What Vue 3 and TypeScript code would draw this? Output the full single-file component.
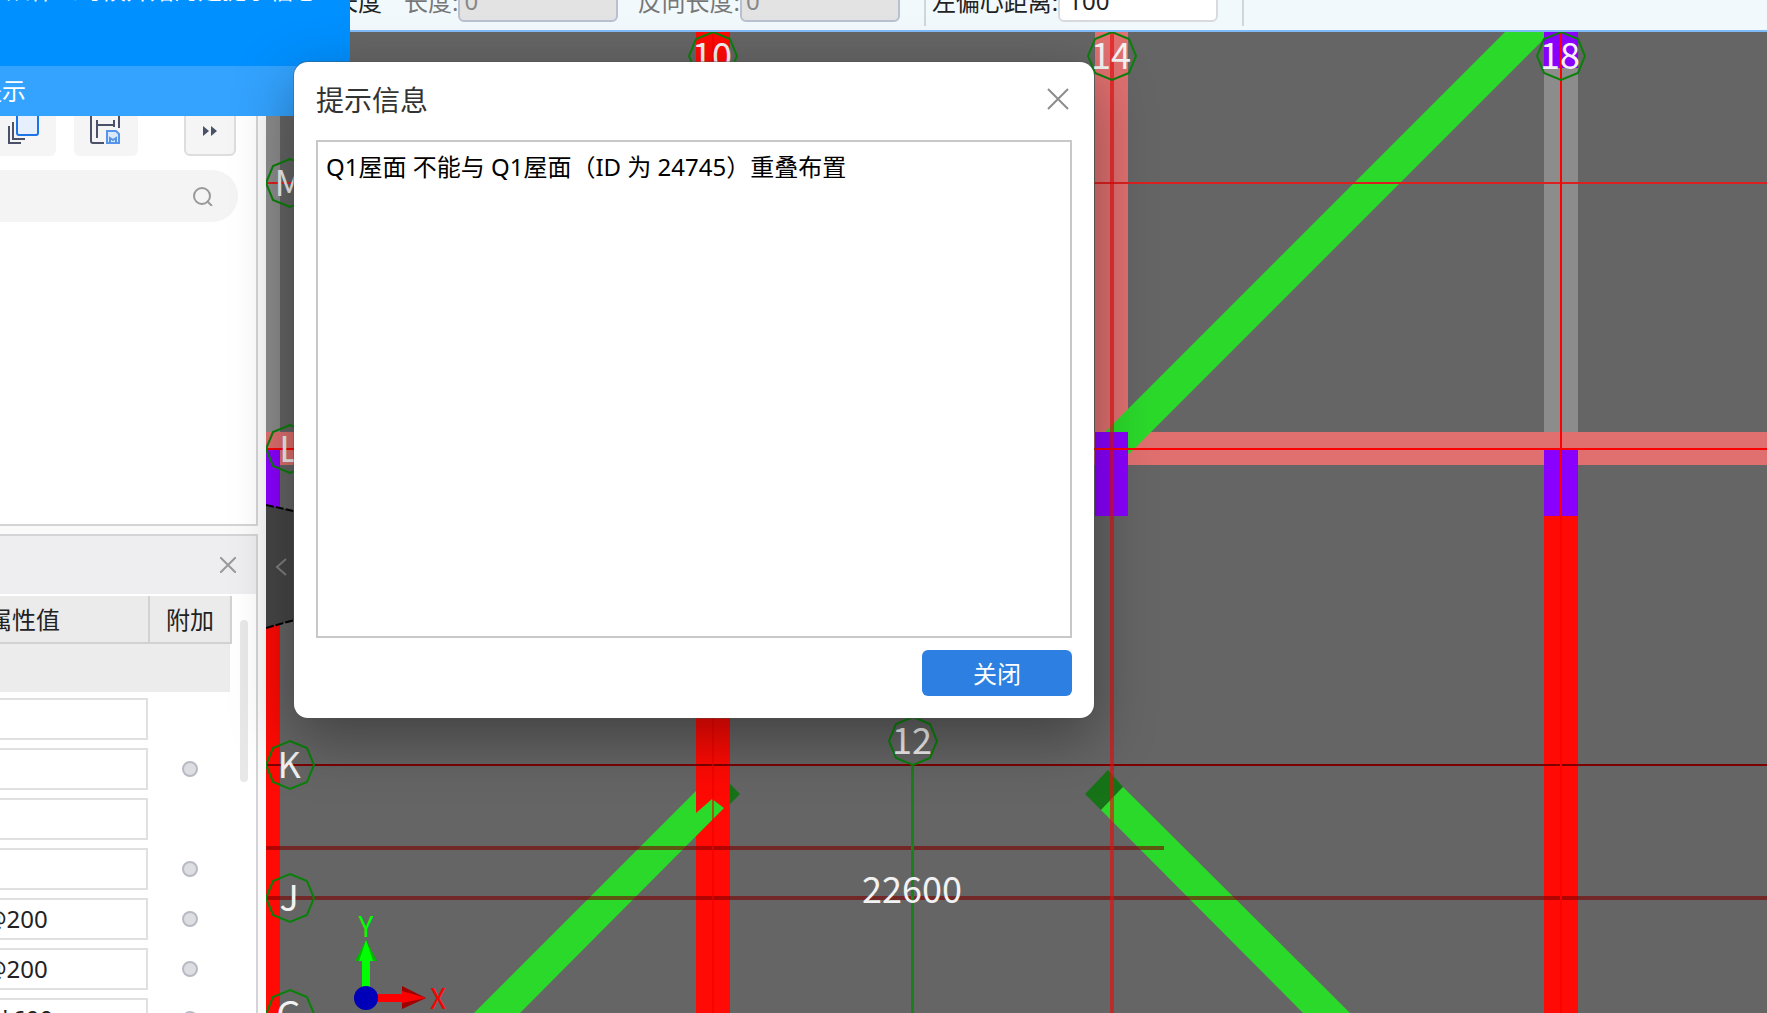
<script setup lang="ts">
import { ref } from 'vue'

interface PropertyRow { id: number; value: string; extra: boolean }
interface AxisMark { label: string; x: number; y: number }

const message = ref('Q1屋面 不能与 Q1屋面（ID 为 24745）重叠布置')
const length = ref('0')
const reverseLength = ref('0')
const offset = ref('100')

const rows = ref<PropertyRow[]>([
  { id: 1, value: '', extra: false },
  { id: 2, value: '', extra: true },
  { id: 3, value: '', extra: false },
  { id: 4, value: '', extra: true },
  { id: 5, value: '@200', extra: true },
  { id: 6, value: '@200', extra: true },
  { id: 7, value: '0*600', extra: true },
])

const marks: AxisMark[] = [
  { label: '10', x: 713, y: 56 },
  { label: '14', x: 1112, y: 56 },
  { label: '18', x: 1561, y: 56 },
  { label: '12', x: 913, y: 741 },
  { label: 'M', x: 290, y: 183 },
  { label: 'L', x: 290, y: 449 },
  { label: 'K', x: 290, y: 765 },
  { label: 'J', x: 290, y: 898 },
  { label: 'G', x: 290, y: 1014 },
]

const octagon = '0,-24 17,-17 24,0 17,17 0,24 -17,17 -24,0 -17,-17'
</script>

<template>
  <div class="app">
    <header class="toolbar">
      <span class="mode">长度</span>
      <label class="muted" for="len">长度:</label>
      <input id="len" v-model="length" class="field off" disabled />
      <label class="muted second" for="rev">反向长度:</label>
      <input id="rev" v-model="reverseLength" class="field off" disabled />
      <i class="sep first"></i>
      <label for="ecc">左偏心距离:</label>
      <input id="ecc" v-model="offset" class="field" />
      <i class="sep"></i>
    </header>

    <div class="work">
      <aside class="side">
        <section class="library">
          <div class="tools">
            <button class="tool" aria-label="复制">
              <svg width="32" height="32" viewBox="0 0 32 32" fill="none" stroke="#4a5168" stroke-width="2">
                <path d="M1 10v17h12M5 6v17h12" />
                <rect x="9" y="-6" width="21" height="25" rx="2" fill="#e6effd" stroke="#1b74e8" />
              </svg>
            </button>
            <button class="tool" aria-label="存档">
              <svg width="32" height="32" viewBox="0 0 32 32" fill="none" stroke="#4a5168" stroke-width="2">
                <path d="M14 27H3q-2 0-2-2V-2M29 -2v14M7 4v18M7 9h17M24 4v7" />
                <path d="M17 15h9l3 3v9H17z" fill="#dbe8fb" stroke="#5596ea" />
                <path d="M20 27v-5l3 2 3-2v5" stroke="#5596ea" />
              </svg>
            </button>
            <button class="tool more" aria-label="更多">
              <svg width="14" height="12" viewBox="0 0 14 12" fill="#4a5168"><path d="M0 1l6 5-6 5zM8 1l6 5-6 5z" /></svg>
            </button>
          </div>
          <div class="search">
            <input type="search" aria-label="搜索" />
            <svg width="20" height="20" viewBox="0 0 20 20" fill="none" stroke="#999" stroke-width="2">
              <circle cx="9" cy="10" r="8" /><path d="M14 15l5 5" />
            </svg>
          </div>
        </section>

        <section class="props">
          <div class="props-head">
            <button class="icon" aria-label="收起">
              <svg width="16" height="16" viewBox="0 0 16 16" stroke="#999" stroke-width="2"><path d="M0 0l16 16M16 0L0 16" /></svg>
            </button>
          </div>
          <div class="grid">
            <table>
              <thead>
                <tr><th class="val">属性值</th><th class="add">附加</th></tr>
              </thead>
              <tbody>
                <tr class="group"><td colspan="2"></td></tr>
                <tr v-for="row in rows" :key="row.id">
                  <td><input v-model="row.value" class="cell" aria-label="属性值" /></td>
                  <td><input v-if="row.extra" type="checkbox" class="dot" aria-label="附加" /></td>
                </tr>
              </tbody>
            </table>
            <div class="scroll"></div>
          </div>
        </section>
      </aside>

      <main class="canvas">
        <svg width="100%" height="100%">
          <g transform="translate(-266 -32)">
            <rect x="266" y="32" width="14" height="400" fill="#8c8c8c" />
            <rect x="1544" y="32" width="34" height="400" fill="#8c8c8c" />
            <rect x="1095" y="32" width="33" height="400" fill="#e07070" />
            <rect x="266" y="432" width="3000" height="33" fill="#e07070" />
            <polygon points="1505,32 1544,32 1544,39 1129,454 1105,432" fill="#2bd92b" />
            <rect x="1544" y="32" width="34" height="36" fill="#8a00ff" />
            <rect x="266" y="449" width="14" height="60" fill="#8a00ff" />
            <rect x="1095" y="432" width="33" height="84" fill="#8a00ff" />
            <rect x="1544" y="449" width="34" height="67" fill="#8a00ff" />
            <rect x="1544" y="516" width="34" height="3000" fill="#ff0a04" />
            <rect x="266" y="620" width="14" height="3000" fill="#ff0a04" />
            <polygon points="717,771 740,794 717,817" fill="#177317" />
            <rect x="696" y="32" width="34" height="3000" fill="#ff0a04" />
            <polygon points="474,1013 696,791 696,813 712,799 724,808 520,1013" fill="#2bd92b" />
            <polygon points="1108,770 1085,794 1101,810 1123,787" fill="#177317" />
            <polygon points="1123,787 1101,810 1303,1013 1350,1013" fill="#2bd92b" />

            <rect x="266" y="182" width="3000" height="2" fill="#dc2020" />
            <rect x="266" y="448" width="3000" height="2" fill="#f00" />
            <rect x="266" y="764" width="3000" height="2" fill="#7d0000" />
            <rect x="266" y="846" width="898" height="4" fill="#7d0000" fill-opacity=".6" />
            <rect x="266" y="896" width="3000" height="4" fill="#7d0000" fill-opacity=".6" />
            <rect x="712" y="32" width="2" height="3000" fill="#e00" fill-opacity=".6" />
            <rect x="1110" y="32" width="4" height="3000" fill="#e80d0d" fill-opacity=".64" />
            <rect x="1560" y="32" width="2" height="3000" fill="#f00" />
            <rect x="911" y="765" width="3" height="3000" fill="#1b7f1b" />

            <g v-for="m in marks" :key="m.label" :transform="`translate(${m.x} ${m.y})`">
              <polygon :points="octagon" fill="none" stroke="#0a800a" stroke-width="2" />
              <text class="mark" x="-1" y="13">{{ m.label }}</text>
            </g>
            <text class="mark" x="912" y="903">22600</text>

            <polygon points="266,505 298,512 298,619 266,628" fill="#464646" />
            <path d="M266 505l32 7M266 628l32-9" stroke="#000" stroke-dasharray="8 2" stroke-width="2" />
            <path d="M286 559l-9 8 9 8" fill="none" stroke="#808080" stroke-width="2" />

            <rect x="362" y="955" width="8" height="35" fill="#0f0" />
            <path d="M366 940l11 21h-22z" fill="#00b800" />
            <path d="M366 940l7 21h-14z" fill="#0f0" />
            <rect x="376" y="994" width="28" height="8" fill="#f00" />
            <path d="M402 986l24 12-24 11z" fill="#a00000" />
            <path d="M402 991l24 7-24 5z" fill="#f00" />
            <circle cx="366" cy="998" r="12" fill="#0000b8" />
            <text class="axis" x="366" y="937" fill="#0f0">Y</text>
            <text class="axis" x="438" y="1009" fill="#f00">X</text>
          </g>
        </svg>
      </main>
    </div>

    <div class="tip">
      <div class="tip-body"><span>从什么时候开始的是提示信息</span></div>
      <div class="tip-foot">提示</div>
    </div>

    <section class="dialog" role="dialog" aria-labelledby="dlg-title">
      <div class="dialog-head">
        <h1 id="dlg-title">提示信息</h1>
        <button class="icon" aria-label="关闭窗口">
          <svg width="22" height="22" viewBox="0 0 22 22" stroke="#8c8c8c" stroke-width="2"><path d="M1 1l20 20M21 1L1 21" /></svg>
        </button>
      </div>
      <textarea v-model="message" aria-label="提示信息" readonly></textarea>
      <button class="close">关闭</button>
    </section>
  </div>
</template>

<style>
body { margin: 0; }
</style>

<style scoped>
* { box-sizing: border-box; }
.app {
  position: relative;
  display: flex;
  flex-direction: column;
  height: 100vh;
  overflow: hidden;
  background: #fff;
  color: #222;
  font: 24px/32px "Noto Sans", "Noto Sans CJK SC", sans-serif;
}
input, button, textarea { font: inherit; color: inherit; margin: 0; }
button { padding: 0; border: 0; background: none; }
svg { display: block; }

.toolbar {
  flex: none;
  display: flex;
  align-items: flex-end;
  height: 32px;
  padding: 0 0 8px 334px;
  overflow: hidden;
  border-bottom: 2px solid #80bbf9;
  background: #f2f9fd;
  white-space: nowrap;
}
.toolbar label, .mode { flex: none; line-height: 40px; }
.mode { margin-right: 22px; }
.muted { color: #777; }
.second { margin-left: 19px; }
.field {
  flex: none;
  width: 160px;
  height: 44px;
  padding: 0 4px;
  border: 2px solid #d8dade;
  border-radius: 6px;
  background: #fff;
}
#ecc { padding-left: 8px; }
.off { border-color: #b9c0d0; background: #e3e3e3; color: #888; }
.sep { flex: none; width: 2px; height: 44px; margin: 0 0 -4px 24px; background: #d2d6da; }
.first { margin-right: 6px; }

.work { flex: 1; display: flex; min-height: 0; }
.side { flex: none; display: flex; flex-direction: column; width: 266px; padding-right: 8px; overflow: hidden; background: #fafafa; }
.library { flex: none; height: 494px; padding-top: 64px; border: solid #d4d4d6; border-width: 0 2px 2px 0; background: #fff; }
.tools { display: flex; justify-content: flex-end; gap: 18px; padding-right: 20px; }
.tool { display: flex; align-items: center; justify-content: center; flex: none; width: 64px; height: 60px; padding-top: 12px; border-radius: 6px; background: #f5f5f5; }
.more { width: 52px; margin-left: 28px; padding-top: 10px; border: 2px solid #ddd; }
.search { display: flex; align-items: center; height: 52px; margin: 14px 18px 0 0; padding-right: 25px; border-radius: 0 26px 26px 0; background: #f4f4f4; }
.search input { flex: 1; min-width: 0; border: 0; background: none; }

.props { flex: 1; min-height: 0; margin-top: 8px; border: solid #d4d4d6; border-width: 2px 2px 0 0; background: #fff; overflow: hidden; }
.props-head { display: flex; align-items: center; justify-content: flex-end; height: 58px; padding-right: 20px; background: #eeeef0; }
.grid { display: flex; justify-content: flex-end; align-items: flex-start; padding: 2px 8px 0 0; }
table { flex: none; width: 332px; border-collapse: separate; border-spacing: 0; table-layout: fixed; }
th { height: 48px; padding: 2px 0 0; border: solid #d2d2d2; border-width: 0 2px 2px 0; background: #ebebeb; font-weight: 400; line-height: 44px; white-space: nowrap; }
th.val { width: 250px; padding-right: 88px; text-align: right; }
td { height: 50px; padding: 0; }
.group td { border: solid #fff; border-width: 0 2px 2px 0; background: #ececec; }
.cell { display: block; width: 248px; height: 42px; padding: 0 0 2px 83px; border: 2px solid #e0e0e0; background: #fff; }
.dot { appearance: none; display: block; width: 16px; height: 16px; margin: 0 32px; border: 2px solid #b8bac4; border-radius: 8px; background: #dcdee2; }
.scroll { flex: none; width: 8px; height: 162px; margin: 24px 0 0 8px; border-radius: 4px; background: #e8e8e8; }

.canvas { flex: 1; min-width: 0; background: #656565; }
.mark { fill: #f2f2f2; font: 400 36px "Noto Sans CJK SC", sans-serif; text-anchor: middle; }
.axis { font: 28px "Noto Sans CJK SC", sans-serif; text-anchor: middle; }

.tip { position: absolute; top: 0; left: 0; width: 350px; color: #fff; }
.tip-body { display: flex; align-items: flex-end; justify-content: flex-end; height: 66px; padding: 0 32px 60px 0; overflow: hidden; background: #0090ff; white-space: nowrap; }
.tip-foot { display: flex; justify-content: flex-end; height: 50px; padding-right: 324px; overflow: hidden; background: #33a3ff; line-height: 50px; white-space: nowrap; }

.dialog {
  position: absolute;
  top: 62px;
  left: 294px;
  display: flex;
  flex-direction: column;
  width: 800px;
  height: 656px;
  padding: 0 22px 22px;
  border-radius: 14px;
  background: #fff;
  box-shadow: 0 0 0 1px rgba(80, 80, 80, .4), 0 20px 60px rgba(0, 0, 0, .36);
}
.dialog-head { display: flex; align-items: center; justify-content: space-between; height: 78px; padding: 0 3px 4px 0; }
h1 { margin: 0; padding-top: 2px; color: #333; font-size: 28px; font-weight: 400; line-height: 40px; }
textarea { flex: 1; padding: 9px 8px; border: 2px solid #c8c8c8; outline: 0; resize: none; background: #fff; color: #000; }
.close { align-self: flex-end; width: 150px; height: 46px; margin-top: 12px; padding-top: 2px; border-radius: 6px; background: #2d7fe2; color: #fff; }
</style>
